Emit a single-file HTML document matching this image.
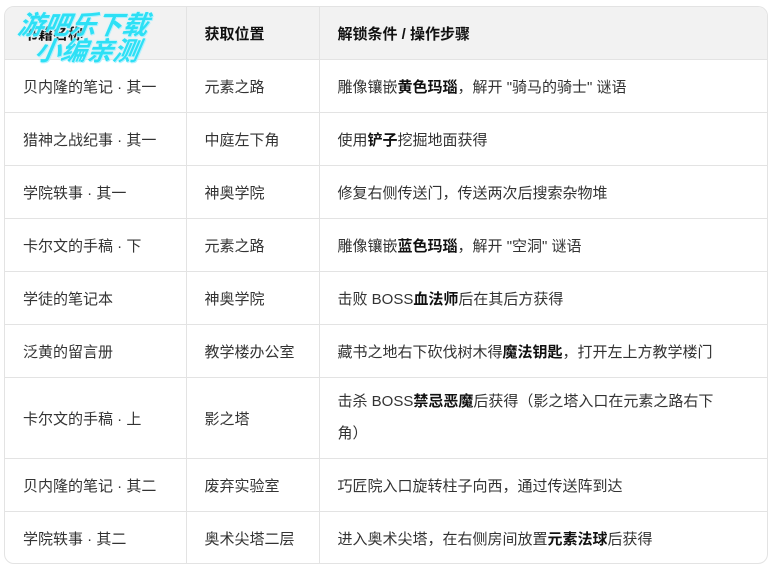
<!DOCTYPE html>
<html><head><meta charset="utf-8"><style>
body{margin:0;background:#fff;font-family:"Liberation Sans","Noto Sans CJK SC",sans-serif;}
.wrap{position:absolute;left:4px;top:6px;width:762px;height:556px;border:1px solid #e3e3e3;border-radius:10px;overflow:hidden;}
table{border-collapse:collapse;width:100%;font-size:15px;color:#333;}
td,th{border-right:1px solid #e3e3e3;border-bottom:1px solid #e3e3e3;padding:0 0 0 18px;text-align:left;vertical-align:middle;}
td:last-child,th:last-child{border-right:none;}
tr:last-child td{border-bottom:none;}
th{background:#f2f2f2;color:#111;font-weight:bold;height:52px;}
td{height:52px;}
td.tall{height:80px;line-height:32px;padding-right:40px;}
b{color:#111;}
.wm{position:absolute;left:16px;top:12px;font-style:italic;font-weight:bold;color:#2de0f5;font-size:26px;line-height:26px;transform:skewX(-10deg);text-shadow:0 0 2px #bff6ff,1px 1px 0 #aef;letter-spacing:0px;}
</style></head><body>
<div class="wrap"><table>
<colgroup><col style="width:181px"><col style="width:133px"><col></colgroup>
<tr><th>书籍名称</th><th>获取位置</th><th>解锁条件 / 操作步骤</th></tr>
<tr><td>贝内隆的笔记 · 其一</td><td>元素之路</td><td>雕像镶嵌<b>黄色玛瑙</b>，解开 "骑马的骑士" 谜语</td></tr>
<tr><td>猎神之战纪事 · 其一</td><td>中庭左下角</td><td>使用<b>铲子</b>挖掘地面获得</td></tr>
<tr><td>学院轶事 · 其一</td><td>神奥学院</td><td>修复右侧传送门，传送两次后搜索杂物堆</td></tr>
<tr><td>卡尔文的手稿 · 下</td><td>元素之路</td><td>雕像镶嵌<b>蓝色玛瑙</b>，解开 "空洞" 谜语</td></tr>
<tr><td>学徒的笔记本</td><td>神奥学院</td><td>击败 BOSS<b>血法师</b>后在其后方获得</td></tr>
<tr><td>泛黄的留言册</td><td>教学楼办公室</td><td>藏书之地右下砍伐树木得<b>魔法钥匙</b>，打开左上方教学楼门</td></tr>
<tr><td>卡尔文的手稿 · 上</td><td>影之塔</td><td class="tall">击杀 BOSS<b>禁忌恶魔</b>后获得（影之塔入口在元素之路右下角）</td></tr>
<tr><td>贝内隆的笔记 · 其二</td><td>废弃实验室</td><td>巧匠院入口旋转柱子向西，通过传送阵到达</td></tr>
<tr><td>学院轶事 · 其二</td><td>奥术尖塔二层</td><td>进入奥术尖塔，在右侧房间放置<b>元素法球</b>后获得</td></tr>
</table></div>
<div class="wm">游吧乐下载<br>&nbsp;&nbsp;&nbsp;小编亲测</div>
</body></html>
